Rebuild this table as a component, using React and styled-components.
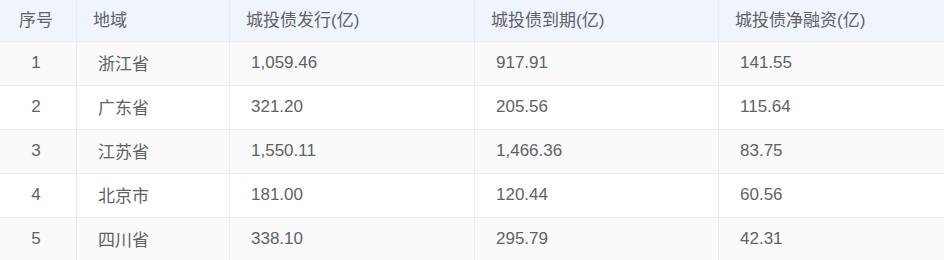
import React from "react";
import styled, { createGlobalStyle } from "styled-components";

const Global = createGlobalStyle`
  html, body { margin: 0; padding: 0; background: #ffffff; }
  body { font-family: "Liberation Sans", "Noto Sans CJK SC", sans-serif; }
`;

const Table = styled.div`
  width: 944px;
  display: flex;
  flex-direction: column;
  color: #606266;
  font-size: 17px;
`;

const Row = styled.div`
  display: grid;
  grid-template-columns: 76px 153px 245px 244px 1fr;
  height: ${(p) => (p.$head ? "42px" : "44px")};
  box-sizing: border-box;
  border-bottom: 1px solid #ebeef5;
  background: ${(p) => (p.$head ? "#f0f4fc" : p.$odd ? "#fafafa" : "#ffffff")};
`;

const Cell = styled.div`
  display: flex;
  align-items: center;
  justify-content: ${(p) => (p.$center ? "center" : "flex-start")};
  padding-left: ${(p) => (p.$center ? "0" : p.$head ? "16px" : "21px")};
  padding-right: ${(p) => (p.$center ? "4px" : "0")};
  padding-bottom: ${(p) => (p.$head ? "4px" : "2px")};
  border-left: ${(p) => (p.$first ? "none" : "1px solid #e9ecf4")};
  white-space: nowrap;
`;

const columns = ["序号", "地域", "城投债发行(亿)", "城投债到期(亿)", "城投债净融资(亿)"];
const data = [
  ["1", "浙江省", "1,059.46", "917.91", "141.55"],
  ["2", "广东省", "321.20", "205.56", "115.64"],
  ["3", "江苏省", "1,550.11", "1,466.36", "83.75"],
  ["4", "北京市", "181.00", "120.44", "60.56"],
  ["5", "四川省", "338.10", "295.79", "42.31"],
];

export default function App() {
  return (
    <>
      <Global />
      <Table>
        <Row $head>
          {columns.map((c, i) => (
            <Cell key={c} $head $first={i === 0} $center={i === 0}>
              {c}
            </Cell>
          ))}
        </Row>
        {data.map((r, ri) => (
          <Row key={ri} $odd={ri % 2 === 0}>
            {r.map((v, i) => (
              <Cell key={i} $first={i === 0} $center={i === 0}>
                {v}
              </Cell>
            ))}
          </Row>
        ))}
      </Table>
    </>
  );
}
